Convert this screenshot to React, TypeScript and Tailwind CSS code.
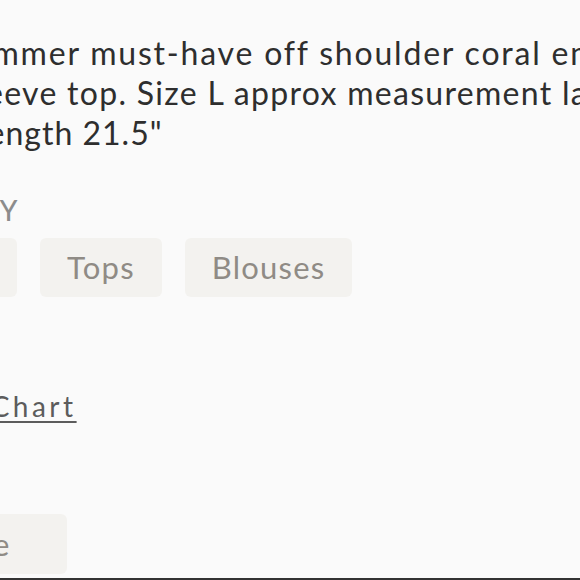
import React from "react";

export default function App() {
  const font = { fontFamily: "Lato, 'Noto Sans', sans-serif" };
  return (
    <div
      className="w-[580px] h-[580px] overflow-hidden bg-[#fafafa] flex flex-col border-b-2 border-[#333333]"
      style={font}
    >
      <div className="text-[32px] leading-[40px] tracking-[1.8px] text-[#2e2e2e] mt-[33px] whitespace-nowrap">
        <div className="ml-[-46px]">Summer must-have off shoulder coral embroidered</div>
        <div className="ml-[-38px] tracking-[1.3px]">sleeve top. Size L approx measurement laying flat</div>
        <div className="ml-[-21px] tracking-[1px]">length 21.5"</div>
      </div>
      <div className="mt-[41px] ml-[-142px] whitespace-nowrap text-[28px] leading-[32px] font-medium text-[#8c8c8c] tracking-[2px]">
        CATEGORY
      </div>
      <div className="mt-[12px] flex gap-[23px] whitespace-nowrap">
        <div className="ml-[-150px] h-[59px] flex items-center px-[27px] rounded-[6px] bg-[#f3f2ef] text-[31px] tracking-[1.2px] text-[#8f8b85]">
          Women
        </div>
        <div className="h-[59px] flex items-center px-[27px] rounded-[6px] bg-[#f3f2ef] text-[31px] tracking-[1.2px] text-[#8f8b85]">
          Tops
        </div>
        <div className="h-[59px] flex items-center px-[27px] rounded-[6px] bg-[#f3f2ef] text-[31px] tracking-[1.2px] text-[#8f8b85]">
          Blouses
        </div>
      </div>
      <div className="mt-[91px] ml-[-83px] whitespace-nowrap text-[28px] leading-[36px] tracking-[3.5px] text-[#5c5c5c] underline underline-offset-[4px] decoration-[1.5px]">
        Size Chart
      </div>
      <div className="mt-[90px] flex">
        <div className="ml-[-97px] h-[60px] flex items-center pl-[27px] pr-[56px] rounded-[6px] bg-[#f3f2ef] text-[31px] tracking-[1.2px] text-[#8f8b85] whitespace-nowrap">
          Large
        </div>
      </div>
    </div>
  );
}
